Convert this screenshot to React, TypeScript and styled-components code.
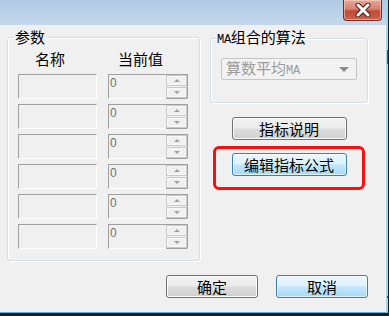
import React from "react";
import styled, { createGlobalStyle } from "styled-components";

const Global = createGlobalStyle`
  html, body { margin: 0; padding: 0; background: #1c1c1c; }
  body { font-family: "Noto Sans CJK SC", "Noto Sans", sans-serif; }
  * { box-sizing: border-box; }
`;

const Screen = styled.div`
  position: relative;
  width: 389px;
  height: 316px;
  background: #1c1c1c;
  overflow: hidden;
`;

const Window = styled.div`
  width: 388px;
  height: 313px;
  background: #f0f0f0;
  border-right: 2px solid #a8d2ee;
  border-bottom: 1px solid #5cb3e3;
  display: flex;
  flex-direction: column;
`;

const TitleBar = styled.div`
  height: 25px;
  flex: none;
  background: linear-gradient(#b1cae4, #c3d8ed);
  display: flex;
  justify-content: flex-end;
  align-items: flex-start;
  padding-right: 4px;
`;

const CloseButton = styled.div`
  width: 39px;
  height: 21px;
  border: 1px solid #7b2a22;
  border-top: none;
  border-radius: 0 0 4px 4px;
  background: linear-gradient(#e6a799 0%, #d9806f 45%, #c34a35 55%, #c9614c 100%);
  box-shadow: inset 0 0 0 1px rgba(255, 220, 210, 0.55);
  display: flex;
  align-items: center;
  justify-content: center;
`;

const Body = styled.div`
  flex: 1;
  display: flex;
  flex-direction: column;
  padding: 4px 18px 0 7px;
`;

const TopRow = styled.div`
  display: flex;
  gap: 10px;
  align-items: flex-start;
`;

const Group = styled.fieldset<{ $w: number; $pad: string }>`
  margin: 0;
  width: ${(p) => p.$w}px;
  min-inline-size: 0;
  padding: ${(p) => p.$pad};
  border: 1px solid #d5dfe5;
  border-radius: 3px;
  box-shadow: inset 1px 1px 0 #ffffff, 1px 1px 0 #ffffff;
`;

const Legend = styled.legend<{ $shift: number }>`
  padding: 0 2px 0 1px;
  margin-left: ${(p) => p.$shift}px;
  font-size: 15px;
  line-height: 16px;
  color: #000;
`;

const Mono = styled.span`
  font-family: "Liberation Mono", monospace;
  font-size: 12px;
  letter-spacing: -0.3px;
`;

const ParamGrid = styled.div`
  display: grid;
  grid-template-columns: 79px 80px;
  column-gap: 11px;
  row-gap: 5px;
`;

const HeaderCell = styled.div<{ $indent: number }>`
  padding-left: ${(p) => p.$indent}px;
  font-size: 15px;
  line-height: 17px;
  height: 17px;
  margin-bottom: 2px;
  color: #000;
`;

const NameBox = styled.div`
  height: 25px;
  background: #f0f0f0;
  border-top: 1px solid #a0a0a0;
  border-left: 1px solid #a0a0a0;
  border-right: 1px solid #ffffff;
  border-bottom: 1px solid #ffffff;
`;

const ValueBox = styled.div`
  height: 25px;
  display: flex;
  background: #f0f0f0;
  border-top: 1px solid #a0a0a0;
  border-left: 1px solid #a0a0a0;
  border-right: 1px solid #a0a0a0;
  border-bottom: 1px solid #ffffff;
`;

const ValueText = styled.div`
  flex: 1;
  font-family: "Liberation Sans", Arial, sans-serif;
  font-size: 12px;
  line-height: 14px;
  padding: 1px 0 0 1px;
  color: #707070;
`;

const Spin = styled.div`
  width: 21px;
  display: flex;
  flex-direction: column;
  gap: 1px;
  padding: 0 0 0 0;
  border-bottom: 1px solid #a0a0a0;
  margin-bottom: -1px;
`;

const SpinHalf = styled.div`
  flex: 1;
  border: 1px solid #c9c9c9;
  background: #f0f0f0;
  box-shadow: inset 0 0 0 1px #f8f8f8;
  display: flex;
  align-items: center;
  justify-content: center;
`;

const Tri = styled.span<{ $up?: boolean }>`
  width: 0;
  height: 0;
  border-left: 3px solid transparent;
  border-right: 3px solid transparent;
  ${(p) =>
    p.$up
      ? "border-bottom: 3px solid #a0a0a0;"
      : "border-top: 3px solid #a0a0a0;"}
`;

const RightCol = styled.div`
  width: 158px;
  display: flex;
  flex-direction: column;
  align-items: center;
`;

const Combo = styled.div`
  width: 136px;
  height: 22px;
  border: 1px solid #c5c5c5;
  border-radius: 2px;
  background: #f2f2f2;
  display: flex;
  align-items: center;
  justify-content: space-between;
  padding: 0 7px 0 4px;
  font-size: 15px;
  line-height: 20px;
  color: #9b9b9b;
`;

const ComboArrow = styled.span`
  width: 0;
  height: 0;
  border-left: 5px solid transparent;
  border-right: 5px solid transparent;
  border-top: 5px solid #8a8a8a;
`;

const Button = styled.div<{ $blue?: boolean; $w: number; $mt?: number }>`
  width: ${(p) => p.$w}px;
  height: 23px;
  margin-top: ${(p) => p.$mt ?? 0}px;
  border: 1px solid ${(p) => (p.$blue ? "#3c7fb1" : "#707070")};
  border-radius: 3px;
  background: ${(p) =>
    p.$blue
      ? "linear-gradient(#ecf7fd 0%, #dcf1fc 48%, #c1e6fb 52%, #a9d9f4 100%)"
      : "linear-gradient(#f2f2f2 0%, #ebebeb 48%, #dddddd 52%, #cfcfcf 100%)"};
  box-shadow: inset 0 0 0 1px ${(p) => (p.$blue ? "rgba(255,255,255,0.6)" : "#fcfcfc")};
  display: flex;
  align-items: center;
  justify-content: center;
  font-size: 15px;
  line-height: 21px;
  color: #000;
`;

const Highlight = styled.div`
  width: 152px;
  margin-top: 6px;
  border: 3px solid #ff0d0d;
  border-radius: 6px;
  padding: 4px 0 11px 0;
  display: flex;
  justify-content: center;
`;

const Footer = styled.div`
  display: flex;
  justify-content: flex-end;
  gap: 18px;
  margin-top: 14px;
`;

const EdgeMark = styled.div<{ $top: number; $h: number }>`
  position: absolute;
  right: 1px;
  top: ${(p) => p.$top}px;
  width: 1px;
  height: ${(p) => p.$h}px;
  background: #d42020;
`;

const rows = [0, 1, 2, 3, 4, 5];

export default function App() {
  return (
    <Screen>
      <Global />
      <Window>
        <TitleBar>
          <CloseButton>
            <svg width="18" height="14" viewBox="0 0 18 14">
              <path d="M4 2 L14 12 M14 2 L4 12" stroke="#4a1a14" strokeWidth="5" strokeLinecap="round" />
              <path d="M4 2 L14 12 M14 2 L4 12" stroke="#ffffff" strokeWidth="3" strokeLinecap="round" />
            </svg>
          </CloseButton>
        </TitleBar>
        <Body>
          <TopRow>
            <Group $w={194} $pad="5px 0 11px 10px">
              <Legend $shift={-4}>参数</Legend>
              <ParamGrid>
                <HeaderCell $indent={17}>名称</HeaderCell>
                <HeaderCell $indent={10}>当前值</HeaderCell>
                {rows.map((r) => (
                  <React.Fragment key={r}>
                    <NameBox />
                    <ValueBox>
                      <ValueText>0</ValueText>
                      <Spin>
                        <SpinHalf>
                          <Tri $up />
                        </SpinHalf>
                        <SpinHalf>
                          <Tri />
                        </SpinHalf>
                      </Spin>
                    </ValueBox>
                  </React.Fragment>
                ))}
              </ParamGrid>
            </Group>
            <RightCol>
              <Group $w={158} $pad="10px 10px 22px 10px">
                <Legend $shift={-5}>
                  <Mono>MA</Mono>组合的算法
                </Legend>
                <Combo>
                  <span>
                    算数平均<Mono>MA</Mono>
                  </span>
                  <ComboArrow />
                </Combo>
              </Group>
              <Button $w={115} $mt={14}>指标说明</Button>
              <Highlight>
                <Button $w={115} $blue>编辑指标公式</Button>
              </Highlight>
            </RightCol>
          </TopRow>
          <Footer>
            <Button $w={92}>确定</Button>
            <Button $w={92} $blue>取消</Button>
          </Footer>
        </Body>
      </Window>
      <EdgeMark $top={50} $h={14} />
      <EdgeMark $top={296} $h={2} />
    </Screen>
  );
}
